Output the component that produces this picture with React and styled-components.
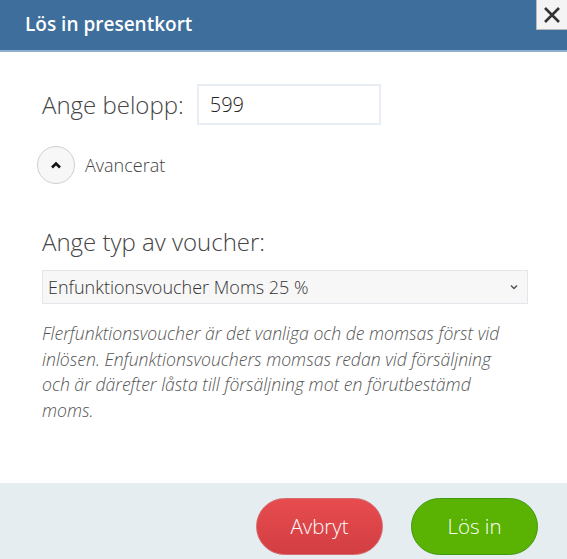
import React from 'react';
import styled, { createGlobalStyle } from 'styled-components';

const Global = createGlobalStyle`
  html, body {
    margin: 0;
    padding: 0;
    background: #fff;
  }
  body {
    font-family: "Open Sans", "Noto Sans", sans-serif;
    color: #333;
  }
`;

const Modal = styled.div`
  position: relative;
  width: 567px;
  height: 559px;
  display: flex;
  flex-direction: column;
  overflow: hidden;
`;

const Header = styled.div`
  height: 50px;
  background: #3d6e9c;
  border-bottom: 2px solid #8fb0cd;
  display: flex;
  align-items: center;
  padding-left: 25px;
`;

const Title = styled.h1`
  margin: 0;
  font-size: 19px;
  font-weight: 600;
  color: #fff;
  padding-bottom: 3px;
`;

const Close = styled.button`
  position: absolute;
  top: 0;
  right: 0;
  width: 31px;
  height: 30px;
  padding: 0;
  background: #f4f4f4;
  border: 1px solid #b9b9b9;
  border-top: none;
  border-right: none;
  display: flex;
  align-items: center;
  justify-content: center;
`;

const Body = styled.div`
  flex: 1;
  padding: 32px 36px 0 42px;
`;

const Row = styled.div`
  display: flex;
  align-items: center;
  gap: 13px;
`;

const Label = styled.label`
  font-size: 24px;
  font-weight: 300;
  color: #444;
`;

const Input = styled.input`
  width: 184px;
  height: 41px;
  box-sizing: border-box;
  border: 2px solid #e8edf3;
  padding: 0 11px;
  font-family: inherit;
  font-size: 20px;
  font-weight: 300;
  color: #222;
  outline: none;
`;

const Toggle = styled.div`
  display: flex;
  align-items: center;
  gap: 10px;
  margin: 21px 0 0 -5px;
  font-size: 18px;
  font-weight: 300;
  color: #444;
`;

const Round = styled.span`
  width: 36px;
  height: 36px;
  border-radius: 50%;
  background: #f7f7f7;
  border: 1px solid #cfcfcf;
  display: flex;
  align-items: center;
  justify-content: center;
`;

const Section = styled.div`
  margin-top: 41px;
`;

const Select = styled.div`
  margin-top: 12px;
  height: 34px;
  width: 486px;
  box-sizing: border-box;
  background: #f7f7f7;
  border: 1px solid #e3e7eb;
  display: flex;
  align-items: center;
  justify-content: space-between;
  padding: 0 9px 0 5px;
  font-size: 18px;
  font-weight: 300;
  color: #333;
`;

const Help = styled.p`
  margin: 17px 0 0;
  max-width: 468px;
  font-size: 17.6px;
  font-style: italic;
  font-weight: 300;
  line-height: 25.5px;
  color: #555;
`;

const Footer = styled.div`
  height: 76px;
  background: #e6edf1;
  display: flex;
  justify-content: flex-end;
  align-items: center;
  gap: 28px;
  padding: 0 29px 0 0;
`;

const Btn = styled.button`
  width: 127px;
  height: 57px;
  margin-top: 10px;
  border-radius: 29px;
  font-family: inherit;
  font-size: 20.5px;
  font-weight: 300;
  color: #fff;
  border: 1px solid ${p => (p.$ok ? '#3f9a0f' : '#d36a6e')};
  background: ${p =>
    p.$ok ? '#5ab203' : 'linear-gradient(#e74c4f, #d23e42)'};
`;

const App = () => (
  <>
    <Global />
    <Modal>
      <Header>
        <Title>Lös in presentkort</Title>
      </Header>
      <Close aria-label="Stäng">
        <svg width="18" height="18" viewBox="0 0 18 18">
          <path d="M2 2L16 16M16 2L2 16" stroke="#333" strokeWidth="2.6" />
        </svg>
      </Close>
      <Body>
        <Row>
          <Label>Ange belopp:</Label>
          <Input defaultValue="599" />
        </Row>
        <Toggle>
          <Round>
            <svg width="12" height="8" viewBox="0 0 12 8">
              <path d="M2 6.5L6 2.5L10 6.5" fill="none" stroke="#111" strokeWidth="2.6" />
            </svg>
          </Round>
          Avancerat
        </Toggle>
        <Section>
          <Label>Ange typ av voucher:</Label>
          <Select>
            Enfunktionsvoucher Moms 25 %
            <svg width="8" height="6" viewBox="0 0 8 6">
              <path d="M1 1.5L4 4.5L7 1.5" fill="none" stroke="#555" strokeWidth="1.5" />
            </svg>
          </Select>
          <Help>
            Flerfunktionsvoucher är det vanliga och de momsas först vid
            inlösen. Enfunktionsvouchers momsas redan vid försäljning och
            är därefter låsta till försäljning mot en förutbestämd moms.
          </Help>
        </Section>
      </Body>
      <Footer>
        <Btn>Avbryt</Btn>
        <Btn $ok>Lös in</Btn>
      </Footer>
    </Modal>
  </>
);

export default App;
